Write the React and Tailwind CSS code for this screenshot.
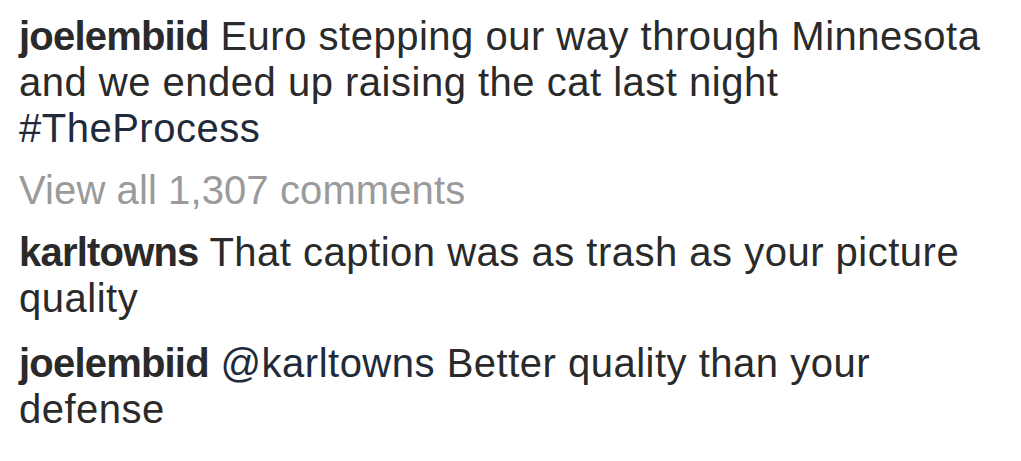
export default function App() {
  return (
    <div className="w-[1021px] h-[461px] bg-white overflow-hidden pl-[19px] pt-[13px] text-[#2a2a2a] text-[40px] leading-[46px] tracking-[0.5px]" style={{ fontFamily: '"Liberation Sans", Arial, sans-serif' }}>
      <p>
        <span className="font-bold tracking-[-0.8px]">joelembiid</span> Euro stepping our way through Minnesota<br />
        and we ended up raising the cat last night<br />
        <span className="text-[#1f2b3a]">#TheProcess</span>
      </p>
      <p className="mt-[16px] text-[#9a9a9a] tracking-[0.1px]">View all 1,307 comments</p>
      <p className="mt-[16px]">
        <span className="font-bold tracking-[-0.8px]">karltowns</span> That caption was as trash as your picture<br />
        quality
      </p>
      <p className="mt-[19px]">
        <span className="font-bold tracking-[-0.8px]">joelembiid</span> <span className="text-[#1f2b3a]">@karltowns</span> Better quality than your<br />
        defense
      </p>
    </div>
  );
}
